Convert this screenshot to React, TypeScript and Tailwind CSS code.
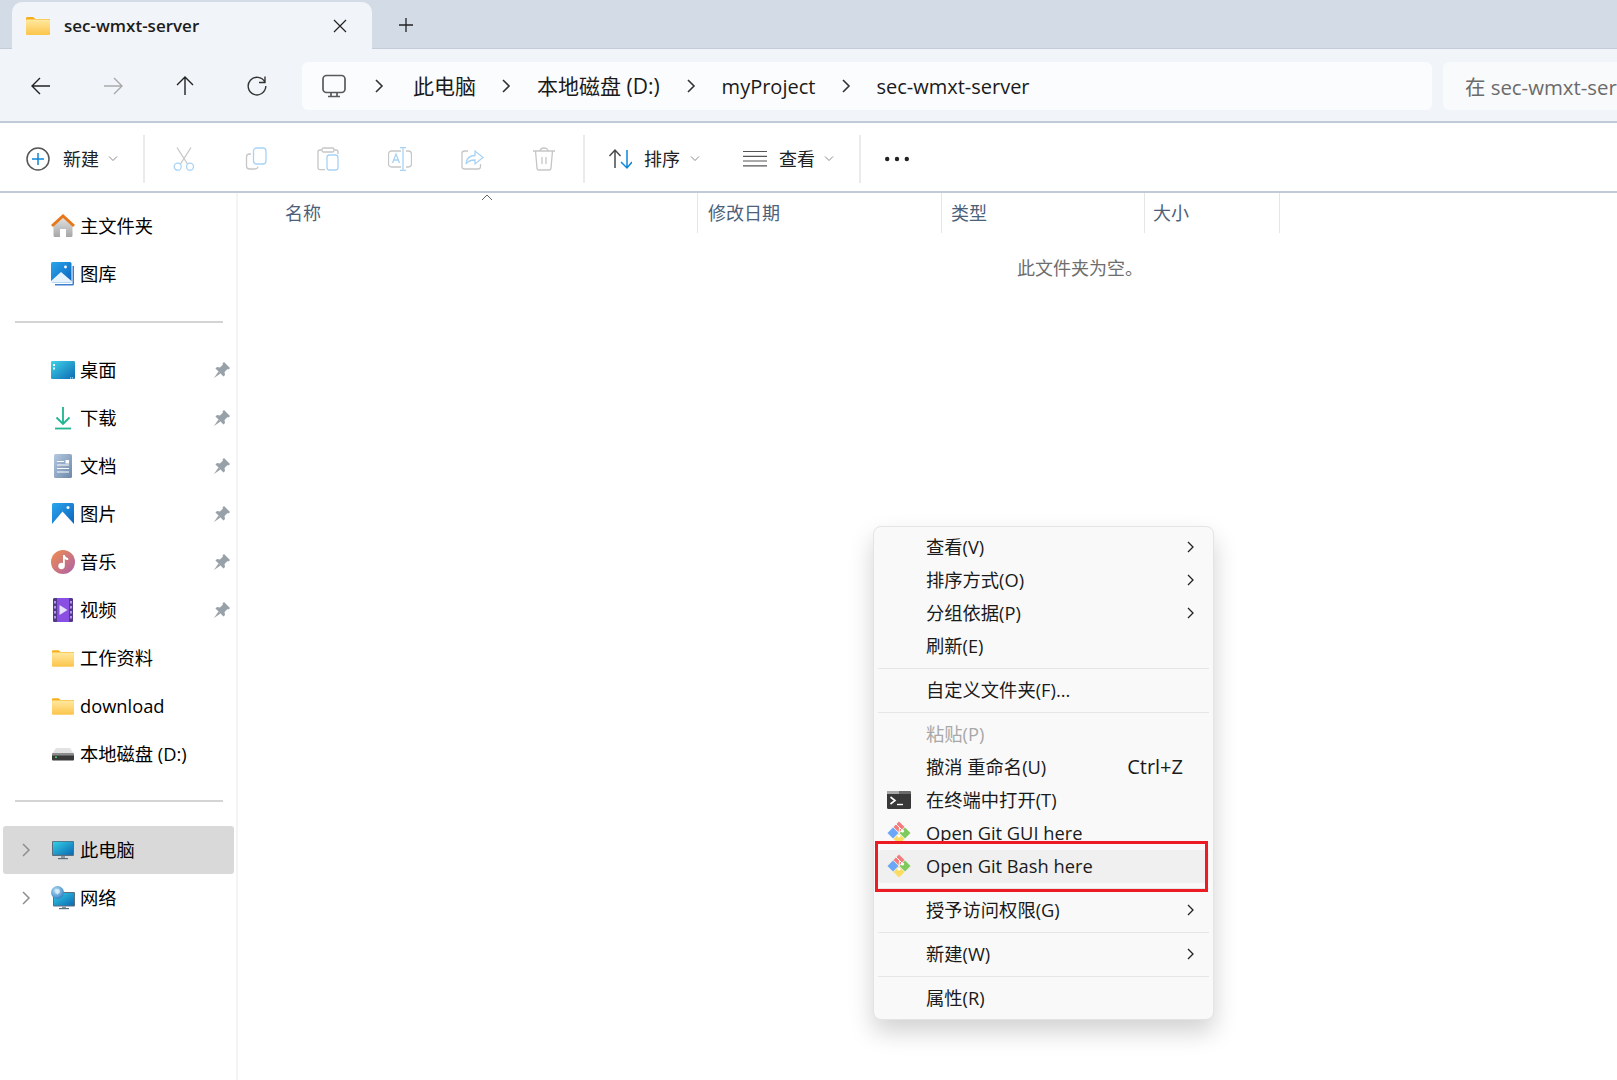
import React, { useId } from 'react';

const FONT = "font-['Open_Sans','Noto_Sans_CJK_SC',sans-serif]";

const Folder: React.FC<{ w?: number; h?: number }> = ({ w = 24, h = 18 }) => {
  const id = useId();
  return (
    <svg width={w} height={h} viewBox="0 0 24 18">
      <defs>
        <linearGradient id={id} x1="0" y1="0" x2="0" y2="1">
          <stop offset="0" stopColor="#ffe9a0" />
          <stop offset="1" stopColor="#fcc44a" />
        </linearGradient>
      </defs>
      <path d="M0 1.2A1.2 1.2 0 0 1 1.2 0H7l2.5 2H24V6H0Z" fill="#f6b01e" />
      <rect y="2.5" width="24" height="15.5" rx="1" fill={`url(#${id})`} />
    </svg>
  );
};

const HomeIcon = () => (
  <svg width="24" height="24" viewBox="0 0 24 24">
    <defs>
      <linearGradient id="homeBody" x1="0" y1="0" x2="0" y2="1">
        <stop offset="0" stopColor="#e2e2e2" />
        <stop offset="1" stopColor="#a6a6a6" />
      </linearGradient>
    </defs>
    <path d="M2.5 12 12 3.5l9.5 8.5v9.5a1.5 1.5 0 0 1-1.5 1.5H15v-8H9v8H4A1.5 1.5 0 0 1 2.5 21.5Z" fill="url(#homeBody)" />
    <path d="M1 12 12 2l11 10" fill="none" stroke="#e8761a" strokeWidth="3" />
  </svg>
);

const PictureIcon: React.FC<{ id: string; stacked?: boolean }> = ({ id, stacked }) => (
  <svg width="24" height="24" viewBox="0 0 24 24">
    <defs>
      <linearGradient id={id} x1="0" y1="0" x2="1" y2="1">
        <stop offset="0" stopColor="#2ba6ec" />
        <stop offset="1" stopColor="#0a62bd" />
      </linearGradient>
    </defs>
    {stacked ? (
      <>
        <path d="M23 4v18a1.5 1.5 0 0 1-1.5 1.5H4V22h17.5V4Z" fill="#3a7fd0" />
        <rect x="0" y="0" width="20.5" height="20.5" rx="1.5" fill={`url(#${id})`} />
        <path d="M0 19 10 10l10.5 9v1.5H0Z" fill="#e6f3fd" />
        <circle cx="14.5" cy="5" r="1.4" fill="#fff" />
      </>
    ) : (
      <>
        <rect x="1" y="1" width="22" height="22" rx="1.5" fill={`url(#${id})`} />
        <path d="M1 22 11.5 9.5 23 22v1H1Z" fill="#fff" />
        <circle cx="17" cy="5.5" r="1.5" fill="#fff" />
      </>
    )}
  </svg>
);

const DesktopIcon = () => (
  <svg width="24" height="24" viewBox="0 0 24 24">
    <defs>
      <linearGradient id="deskFill" x1="0" y1="0" x2="1" y2="1">
        <stop offset="0" stopColor="#3fd3e8" />
        <stop offset="1" stopColor="#0c6ab4" />
      </linearGradient>
    </defs>
    <rect y="3" width="24" height="18" rx="1.2" fill="url(#deskFill)" />
    <rect x="2" y="6" width="2" height="2" fill="#fff" />
    <rect x="2" y="9.5" width="2" height="2" fill="#dff" />
    <rect x="19" y="19.5" width="1.2" height="1" fill="#dff" />
    <rect x="21" y="19.5" width="1.2" height="1" fill="#dff" />
  </svg>
);

const DownloadIcon = () => (
  <svg width="24" height="24" viewBox="0 0 24 24" fill="none" stroke="#1fb590" strokeWidth="1.8">
    <path d="M12 1v17M5.5 11.5 12 18l6.5-6.5" />
    <path d="M4 22.5h16" />
  </svg>
);

const DocIcon = () => (
  <svg width="24" height="24" viewBox="0 0 24 24">
    <defs>
      <linearGradient id="docFill" x1="0" y1="0" x2="1" y2="1">
        <stop offset="0" stopColor="#b5c8df" />
        <stop offset="1" stopColor="#6c89a9" />
      </linearGradient>
    </defs>
    <rect x="3" y="0" width="18" height="24" rx="1.5" fill="url(#docFill)" />
    <path d="M6 7.5h7M6 11h12M6 14.5h12M6 18h12" stroke="#fff" strokeWidth="1.2" />
    <rect x="14.5" y="6" width="3.5" height="3.5" fill="#fff" />
  </svg>
);

const MusicIcon = () => (
  <svg width="24" height="24" viewBox="0 0 24 24">
    <defs>
      <linearGradient id="musicFill" x1="0" y1="0" x2="1" y2="1">
        <stop offset="0" stopColor="#f08f4c" />
        <stop offset="1" stopColor="#ad5fab" />
      </linearGradient>
    </defs>
    <circle cx="12" cy="12" r="12" fill="url(#musicFill)" />
    <path d="M12 5h1.8c.3 1.8 1.6 2.7 3.4 3v2c-1.5 0-2.6-.4-3.4-1.1V16a3.3 3.3 0 1 1-1.8-2.9Z" fill="#fff" />
  </svg>
);

const VideoIcon = () => (
  <svg width="24" height="24" viewBox="0 0 24 24">
    <rect x="2" y="0" width="20" height="24" rx="2" fill="#8a4fe2" />
    <path d="M6 0H3.5A1.5 1.5 0 0 0 2 1.5V22.5A1.5 1.5 0 0 0 3.5 24H6ZM18 0v24h2.5a1.5 1.5 0 0 0 1.5-1.5V1.5A1.5 1.5 0 0 0 20.5 0Z" fill="#4f3a88" />
    <path d="M3 3h2v2.5H3ZM3 8h2v2.5H3ZM3 13h2v2.5H3ZM3 18h2v2.5H3ZM19 3h2v2.5h-2ZM19 8h2v2.5h-2ZM19 13h2v2.5h-2ZM19 18h2v2.5h-2Z" fill="#b692f0" />
    <path d="M8.5 7v10l8-5Z" fill="#e6e0fa" />
  </svg>
);

const DiskIcon = () => (
  <svg width="24" height="24" viewBox="0 0 24 24">
    <path d="M5 6h14l4 6H1Z" fill="#e2e2e2" />
    <rect x="1" y="11.5" width="22" height="7" rx="1" fill="#3a3a3a" />
    <rect x="1" y="11.5" width="22" height="2" fill="#8c8c8c" />
    <rect x="4" y="14.5" width="2" height="1.5" fill="#3fd05a" />
  </svg>
);

const PcIcon = () => (
  <svg width="24" height="24" viewBox="0 0 24 24">
    <defs>
      <linearGradient id="pcFill" x1="0" y1="0" x2="1" y2="1">
        <stop offset="0" stopColor="#33cfe6" />
        <stop offset="1" stopColor="#0c69b2" />
      </linearGradient>
    </defs>
    <rect x="1" y="3" width="22" height="15" rx="1" fill="#5b6e7e" />
    <rect x="2" y="3.8" width="20" height="13" fill="url(#pcFill)" />
    <rect x="10" y="18" width="4" height="2" fill="#8a98a4" />
    <rect x="7" y="20" width="10" height="1.2" fill="#5b6e7e" />
  </svg>
);

const NetIcon = () => (
  <svg width="24" height="24" viewBox="0 0 24 24">
    <defs>
      <linearGradient id="netFill" x1="0" y1="0" x2="1" y2="1">
        <stop offset="0" stopColor="#33cfe6" />
        <stop offset="1" stopColor="#0c69b2" />
      </linearGradient>
      <radialGradient id="netGlobe" cx="0.4" cy="0.35" r="0.7">
        <stop offset="0" stopColor="#bfe4f8" />
        <stop offset="1" stopColor="#2a7cc0" />
      </radialGradient>
    </defs>
    <rect x="2" y="6" width="22" height="14.5" rx="1" fill="#5b6e7e" />
    <rect x="3" y="7" width="20" height="12.5" fill="url(#netFill)" />
    <rect x="11" y="20.5" width="4" height="1.6" fill="#8a98a4" />
    <rect x="8" y="22" width="10" height="1.2" fill="#5b6e7e" />
    <circle cx="6.5" cy="6.5" r="6.5" fill="url(#netGlobe)" />
    <path d="M4 3.5 8 3 9 6 6.5 8.5 4.5 6.5Z" fill="#e7f1f8" opacity="0.8" />
  </svg>
);

const PinIcon = () => (
  <svg width="16" height="16" viewBox="0 0 16 16" fill="#98a1a8">
    <path d="M10 0l6 6-1.5 1.5-1-.5-3 3 .5 3-1.5 1.5-8-8L3 5l3 .5 3-3-.5-1Z" />
    <path d="M4.5 9.5 0 16l6.5-4.5Z" />
  </svg>
);

const GitIcon = () => (
  <svg width="24" height="24" viewBox="0 0 24 24">
    <path d="M12 .5 17.5 6 12 11.5 6.5 6Z" fill="#f47c7c" />
    <path d="M18 6.5 23.5 12 18 17.5 12.5 12Z" fill="#7fca5c" />
    <path d="M12 12.5 17.5 18 12 23.5 6.5 18Z" fill="#fbdc62" />
    <path d="M6 6.5 11.5 12 6 17.5.5 12Z" fill="#6ba7f6" />
    <path d="M9 3 15 9M12.5 6.5 12 12" stroke="#fff" strokeWidth="1" fill="none" />
    <circle cx="15.5" cy="10" r="1.6" fill="#fff" />
    <circle cx="12" cy="15" r="1.6" fill="#fff" />
  </svg>
);

const TerminalIcon = () => (
  <svg width="24" height="24" viewBox="0 0 24 24">
    <rect y="3" width="24" height="18" rx="1.5" fill="#383838" />
    <path d="M0 4.5A1.5 1.5 0 0 1 1.5 3H12v3H0Z" fill="#a8a8a8" />
    <path d="M12 3h10.5A1.5 1.5 0 0 1 24 4.5V6H12Z" fill="#6a6a6a" />
    <path d="M3.5 9 8 12.5 3.5 16" fill="none" stroke="#fff" strokeWidth="1.6" />
    <path d="M10 16.5h6" stroke="#fff" strokeWidth="1.4" />
  </svg>
);

const G = '#c6c6c6';
const B = '#a9d3f5';

const CutIcon = () => (
  <svg width="24" height="24" viewBox="0 0 24 24" fill="none" strokeWidth="1.3">
    <path d="M5 .5 15.5 17M19 .5 8.5 17" stroke={G} />
    <circle cx="5.7" cy="19.7" r="3.5" stroke={B} />
    <circle cx="18" cy="19.7" r="3.5" stroke={B} />
  </svg>
);

const CopyIcon = () => (
  <svg width="24" height="24" viewBox="0 0 24 24" fill="none" strokeWidth="1.3">
    <path d="M7 7H5.5a3 3 0 0 0-3 3v9a3 3 0 0 0 3 3H11a3 3 0 0 0 3-2.5" stroke={G} />
    <rect x="9.5" y="1" width="12.5" height="16" rx="3" stroke={B} />
  </svg>
);

const PasteIcon = () => (
  <svg width="24" height="24" viewBox="0 0 24 24" fill="none" strokeWidth="1.3">
    <path d="M9 22.7H4a2 2 0 0 1-2-2V5a2 2 0 0 1 2-2h2M18 3h2a2 2 0 0 1 2 2v2" stroke={G} />
    <rect x="6" y="1" width="12" height="4" rx="1.5" stroke={G} />
    <rect x="11" y="8" width="11" height="15" rx="2.5" stroke={B} />
  </svg>
);

const RenameIcon = () => (
  <svg width="24" height="24" viewBox="0 0 24 24" fill="none" strokeWidth="1.3">
    <path d="M13 4H3.5A3 3 0 0 0 .5 7v10a3 3 0 0 0 3 3H13M18 4h2.5a3 3 0 0 1 3 3v10a3 3 0 0 1-3 3H18" stroke={G} />
    <path d="M15 .5v23M12 .5h6M12 23.5h6" stroke={B} />
    <path d="M4.5 16 8 7l3.5 9M5.8 13h4.4" stroke={B} />
  </svg>
);

const ShareIcon = () => (
  <svg width="24" height="24" viewBox="0 0 24 24" fill="none" strokeWidth="1.3">
    <path d="M8 4H4.5A2.5 2.5 0 0 0 2 6.5v13A2.5 2.5 0 0 0 4.5 22H18a2.5 2.5 0 0 0 2.5-2.5V17" stroke={G} />
    <path d="M6 17c.5-6 4-8.5 9-8.5V4l8 6.5-8 6.5v-4c-4 0-7 1-9 4Z" stroke={B} />
  </svg>
);

const TrashIcon = () => (
  <svg width="24" height="24" viewBox="0 0 24 24" fill="none" strokeWidth="1.3" stroke={G}>
    <path d="M1 4h22M8 4a4 3 0 0 1 8 0M3.5 4 5 21a2 2 0 0 0 2 2h10a2 2 0 0 0 2-2l1.5-17M10 10v7M14 10v7" />
  </svg>
);

const SmallChevron = () => (
  <svg width="12" height="8" viewBox="0 0 12 8" fill="none" stroke="#8a8a8a" strokeWidth="1">
    <path d="M2 1.5 6 5.5l4-4" />
  </svg>
);

const NavChevron = () => (
  <svg width="10" height="14" viewBox="0 0 10 14" fill="none" stroke="#333" strokeWidth="1.6" className="shrink-0">
    <path d="M2 1l6 6-6 6" />
  </svg>
);

const Arrow: React.FC<{ d: string; color?: string }> = ({ d, color = '#222' }) => (
  <svg width="24" height="24" viewBox="0 0 24 24" fill="none" stroke={color} strokeWidth="1.4">
    <path d={d} />
  </svg>
);

const NavButton: React.FC<{ children: React.ReactNode }> = ({ children }) => (
  <div className="w-[72px] flex items-center justify-center">{children}</div>
);

const Divider = () => <div className="w-[2px] h-[48px] bg-[#ebebeb] shrink-0" />;

const TabStrip = () => (
  <div className="h-[49px] bg-[#d3dce6] border-b border-[#c3ccd8] flex items-end pl-[12px]">
    <div className="w-[360px] h-[47px] -mb-px bg-[#f1f4f8] rounded-t-[10px] flex items-center pl-[14px]">
      <Folder />
      <span className="ml-[14px] text-[17px] font-semibold text-[#1c1c1c]">sec-wmxt-server</span>
      <svg width="14" height="14" viewBox="0 0 14 14" fill="none" stroke="#222" strokeWidth="1.2" className="ml-auto mr-[25px]">
        <path d="M1 1l12 12M13 1 1 13" />
      </svg>
    </div>
    <svg width="14" height="14" viewBox="0 0 14 14" fill="none" stroke="#222" strokeWidth="1.3" className="ml-[27px] mb-[16px]">
      <path d="M7 0v14M0 7h14" />
    </svg>
  </div>
);

const NavBar = () => (
  <div className="h-[74px] bg-[#f1f4f8] border-b-2 border-[#c1cbd7] flex items-center pl-[5px] pt-[2px]">
    <NavButton><Arrow d="M3 12h18M11 4l-8 8 8 8" /></NavButton>
    <NavButton><Arrow d="M3 12h18M13 4l8 8-8 8" color="#a9a9a9" /></NavButton>
    <NavButton><Arrow d="M12 21V3M4 11l8-8 8 8" /></NavButton>
    <NavButton><Arrow d="M19.8 8A8.8 8.8 0 1 0 20.8 12M20 2.5v6h-6" color="#333" /></NavButton>
    <div className="ml-[9px] w-[1130px] h-[48px] bg-[#fbfcfe] rounded-md flex items-center pl-[20px] text-[21px] text-[#1a1a1a] whitespace-nowrap">
      <svg width="24" height="24" viewBox="0 0 24 24" fill="none" stroke="#5a5a5a" strokeWidth="1.7">
        <rect x="1" y="1.5" width="22" height="17" rx="3.5" />
        <path d="M9 18.5v4M15 18.5v4M6 22.5h12" />
      </svg>
      <div className="ml-[28px]"><NavChevron /></div>
      <span className="ml-[29px] mt-[2px]">此电脑</span>
      <div className="ml-[25px]"><NavChevron /></div>
      <span className="ml-[26px] mt-[2px]">本地磁盘 (D:)</span>
      <div className="ml-[26px]"><NavChevron /></div>
      <span className="ml-[26px] mt-[2px] text-[20px]">myProject</span>
      <div className="ml-[26px]"><NavChevron /></div>
      <span className="ml-[25px] mt-[2px] text-[20px]">sec-wmxt-server</span>
    </div>
    <div className="ml-[11px] flex-1 min-w-0 h-[48px] bg-[#f9fafc] rounded-l-md flex items-center pl-[22px] text-[20.4px] text-[#6b6b6b] whitespace-nowrap">
      <span className="mt-[2px]">在 sec-wmxt-ser</span>
    </div>
  </div>
);

const Toolbar = () => (
  <div className="h-[70px] border-b-2 border-[#c1cbd7] flex items-center pt-[4px] text-[18px] text-[#222] bg-white">
    <div className="w-[143px] flex items-center pl-[26px]">
      <svg width="24" height="24" viewBox="0 0 24 24" fill="none" strokeWidth="1.5">
        <circle cx="12" cy="12" r="11" stroke="#555" />
        <path d="M12 6v12M6 12h12" stroke="#0f86d8" />
      </svg>
      <span className="ml-[13px]">新建</span>
      <div className="ml-[8px] flex"><SmallChevron /></div>
    </div>
    <Divider />
    <div className="ml-[3px] flex">
      {[CutIcon, CopyIcon, PasteIcon, RenameIcon, ShareIcon, TrashIcon].map((Icon, i) => (
        <div key={i} className="w-[72px] flex justify-center"><Icon /></div>
      ))}
    </div>
    <div className="ml-[3px]"><Divider /></div>
    <div className="ml-[23px] flex">
      <svg width="24" height="24" viewBox="0 0 24 24" fill="none" strokeWidth="1.5">
        <path d="M7 21V3M1.5 9 7 3l5.5 6" stroke="#4a4a4a" />
        <path d="M19 3v18M13 15l6 6 5-6" stroke="#0f86d8" />
      </svg>
    </div>
    <span className="ml-[12px]">排序</span>
    <div className="ml-[9px] flex"><SmallChevron /></div>
    <div className="ml-[42px] flex">
      <svg width="24" height="24" viewBox="0 0 24 24" fill="none" stroke="#555" strokeWidth="1.2">
        <path d="M0 4.5h24M0 9.3h24M0 14h24M0 18.8h24" />
      </svg>
    </div>
    <span className="ml-[12px]">查看</span>
    <div className="ml-[8px] flex"><SmallChevron /></div>
    <div className="ml-[24px]"><Divider /></div>
    <svg width="24" height="6" viewBox="0 0 24 6" fill="#222" className="ml-[24px]">
      <circle cx="2.2" cy="3" r="2.2" />
      <circle cx="12" cy="3" r="2.2" />
      <circle cx="21.8" cy="3" r="2.2" />
    </svg>
  </div>
);

const SideRow: React.FC<{
  icon: React.ReactNode;
  label: string;
  pinned?: boolean;
  expand?: boolean;
  selected?: boolean;
}> = ({ icon, label, pinned, expand, selected }) => (
  <div className={`h-12 w-[231px] ml-[3px] rounded-[3px] flex items-center ${selected ? 'bg-[#d9d9d9]' : ''}`}>
    <div className="w-[48px] flex justify-center pr-[3px]">
      {expand && (
        <svg width="10" height="14" viewBox="0 0 10 14" fill="none" stroke="#8f8f8f" strokeWidth="1.5">
          <path d="M2 1l6 6-6 6" />
        </svg>
      )}
    </div>
    <div className="w-6 h-6 flex items-center justify-center shrink-0">{icon}</div>
    <span className="ml-[5px] flex-1 text-[18.3px] text-black whitespace-nowrap">{label}</span>
    {pinned && <div className="mr-[4px] flex"><PinIcon /></div>}
  </div>
);

const Sidebar = () => (
  <div className="w-[238px] shrink-0 border-r-2 border-[#f4f4f4] pt-[9px]">
    <SideRow icon={<HomeIcon />} label="主文件夹" />
    <SideRow icon={<PictureIcon id="galleryFill" stacked />} label="图库" />
    <div className="h-[48px] flex items-center pl-[15px]"><div className="w-[208px] h-[2px] bg-[#d4d4d4]" /></div>
    <SideRow icon={<DesktopIcon />} label="桌面" pinned />
    <SideRow icon={<DownloadIcon />} label="下载" pinned />
    <SideRow icon={<DocIcon />} label="文档" pinned />
    <SideRow icon={<PictureIcon id="picFill" />} label="图片" pinned />
    <SideRow icon={<MusicIcon />} label="音乐" pinned />
    <SideRow icon={<VideoIcon />} label="视频" pinned />
    <SideRow icon={<Folder w={22} h={17} />} label="工作资料" />
    <SideRow icon={<Folder w={22} h={17} />} label="download" />
    <SideRow icon={<DiskIcon />} label="本地磁盘 (D:)" />
    <div className="h-[48px] flex items-center pl-[15px] pb-[2px]"><div className="w-[208px] h-[2px] bg-[#d4d4d4]" /></div>
    <SideRow icon={<PcIcon />} label="此电脑" expand selected />
    <SideRow icon={<NetIcon />} label="网络" expand />
  </div>
);

const columns = [
  { label: '名称', className: 'w-[460px] pl-[47px]' },
  { label: '修改日期', className: 'w-[244px] pl-[10px]' },
  { label: '类型', className: 'w-[203px] pl-[9px]' },
  { label: '大小', className: 'w-[135px] pl-[8px]' },
];

const FileList = () => (
  <div className="flex-1 min-w-0 relative">
    <div className="flex h-[40px]">
      {columns.map((c) => (
        <div key={c.label} className={`${c.className} border-r border-[#e5e5e5] flex items-center text-[18px] text-[#4c607a]`}>
          {c.label}
        </div>
      ))}
    </div>
    <svg width="12" height="7" viewBox="0 0 12 7" fill="none" stroke="#666" strokeWidth="1" className="absolute left-[243px] top-[1px]">
      <path d="M1 6l5-5 5 5" />
    </svg>
    <div className="mt-[23px] ml-[779px] text-[18px] leading-6 text-[#6d6d6d]">此文件夹为空。</div>
  </div>
);

const MenuRow: React.FC<{
  label: string;
  icon?: React.ReactNode;
  sub?: boolean;
  shortcut?: string;
  disabled?: boolean;
  hover?: boolean;
}> = ({ label, icon, sub, shortcut, disabled, hover }) => (
  <div className={`h-[33px] pb-[2px] mx-[4px] rounded-[4px] flex items-center text-[18.3px] whitespace-nowrap ${hover ? 'bg-[#f0f0f0]' : ''} ${disabled ? 'text-[#a8a8a8]' : 'text-[#1a1a1a]'}`}>
    <div className="w-[48px] pl-[9px] flex shrink-0">{icon}</div>
    <span className="flex-1">{label}</span>
    {shortcut && <span className="mr-[26px] text-[20px]">{shortcut}</span>}
    {sub && (
      <svg width="10" height="14" viewBox="0 0 10 14" fill="none" stroke="#222" strokeWidth="1.3" className="mr-[14px]">
        <path d="M3 2l5 5-5 5" />
      </svg>
    )}
  </div>
);

const MenuSep = () => (
  <div className="h-[11px] mx-[4px] flex items-center"><div className="w-full h-px bg-[#e6e6e6]" /></div>
);

const ContextMenu = () => (
  <div className="absolute left-[873px] top-[526px] w-[341px] bg-[#f9f9f9] border border-[#e4e4e4] rounded-lg pt-[4px] pb-[4px] shadow-[0_12px_24px_rgba(0,0,0,0.18)]">
    <MenuRow label="查看(V)" sub />
    <MenuRow label="排序方式(O)" sub />
    <MenuRow label="分组依据(P)" sub />
    <MenuRow label="刷新(E)" />
    <MenuSep />
    <MenuRow label="自定义文件夹(F)..." />
    <MenuSep />
    <MenuRow label="粘贴(P)" disabled />
    <MenuRow label="撤消 重命名(U)" shortcut="Ctrl+Z" />
    <MenuRow label="在终端中打开(T)" icon={<TerminalIcon />} />
    <MenuRow label="Open Git GUI here" icon={<GitIcon />} />
    <MenuRow label="Open Git Bash here" icon={<GitIcon />} hover />
    <MenuSep />
    <MenuRow label="授予访问权限(G)" sub />
    <MenuSep />
    <MenuRow label="新建(W)" sub />
    <MenuSep />
    <MenuRow label="属性(R)" />
    <div className="absolute left-[1px] top-[314px] w-[333px] h-[51px] border-[3px] border-[#ed1c24]" />
  </div>
);

export default function App() {
  return (
    <div className={`relative w-[1617px] h-[1080px] overflow-hidden bg-white flex flex-col ${FONT}`}>
      <TabStrip />
      <NavBar />
      <Toolbar />
      <div className="flex flex-1 min-h-0">
        <Sidebar />
        <FileList />
      </div>
      <ContextMenu />
    </div>
  );
}
